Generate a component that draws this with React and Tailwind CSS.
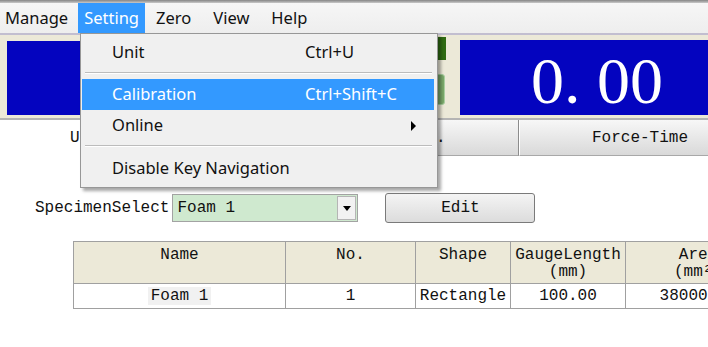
import React from "react";

const mono = "font-['Liberation_Mono',monospace]";

function MenuBar() {
    const items = ["Zero", "View", "Help"];
    return (
        <div className="h-[30px] flex items-stretch bg-gradient-to-b from-[#f6f6f6] to-[#eeeeee] text-[16.5px] text-[#111]">
            <div className="pl-[5px] pr-[10px] flex items-center">Manage</div>
            <div className="px-[6px] flex items-center bg-[#3399ff] text-white">Setting</div>
            {items.map((item) => (
                <div key={item} className="px-[11px] flex items-center">{item}</div>
            ))}
        </div>
    );
}

function SettingMenu() {
    // dropdown that lies over the page
    return (
        <div className="absolute left-[80px] top-[33px] w-[358px] h-[155px] bg-[#f0f0f0] border border-[#979797] shadow-[3px_3px_3px_rgba(0,0,0,0.35)] pt-[2px] pb-[3px] text-[16.5px] text-[#111]">
            <div className="h-[32px] flex items-center">
                <span className="w-[224px] pl-[31px]">Unit</span>
                <span>Ctrl+U</span>
            </div>
            <div className="h-[11px] pt-[4px] ml-[4px] mr-[5px]">
                <div className="border-t border-[#bcbcbc] border-b border-b-white"></div>
            </div>
            <div className="h-[31px] flex items-center bg-[#3399ff] text-white ml-[1px] mr-[3px]">
                <span className="w-[223px] pl-[30px]">Calibration</span>
                <span>Ctrl+Shift+C</span>
            </div>
            <div className="h-[31px] flex items-center">
                <span className="w-[224px] pl-[31px]">Online</span>
                <span className="ml-auto mr-[21px] w-0 h-0 border-y-[5px] border-y-transparent border-l-[5px] border-l-black"></span>
            </div>
            <div className="h-[11px] pt-[4px] ml-[4px] mr-[5px]">
                <div className="border-t border-[#bcbcbc] border-b border-b-white"></div>
            </div>
            <div className="h-[32px] flex items-center">
                <span className="pl-[31px]">Disable Key Navigation</span>
            </div>
        </div>
    );
}

function Display() {
    return (
        <div className="h-[83px] bg-[#ece9d8] flex items-start pt-[5px] pl-[7px]">
            <div className="w-[418px] h-[74px] mt-[1px] bg-[#0404bf]"></div>
            <div className="w-[21px] -mt-[3px] flex flex-col">
                <div className="h-[23px] bg-[#2f6b12]"></div>
                <div className="h-[31px] mt-[14px] mr-[1px] rounded-[3px] border border-[#a9cfa0] bg-[#7aa86a]"></div>
            </div>
            <div className="flex-1 h-[75px] ml-[14px] bg-[#0404bf] flex justify-end pt-[8px] pr-[45px]">
                <span className="font-['Liberation_Serif',serif] text-[66px] leading-none text-white">0. 00</span>
            </div>
        </div>
    );
}

function Tabs() {
    return (
        <div className={`h-[38px] flex border-t-2 border-[#b4b4b4] text-[16px] text-[#111] ${mono}`}>
            <div className="w-[282px] bg-white flex items-center pl-[70px]">U</div>
            <div className="w-[237px] flex items-center pl-[154px] bg-gradient-to-b from-[#f7f7f7] to-[#d9d9d9] border-b border-[#a8a8a8] border-r border-r-[#8c8c8c]">.</div>
            <div className="flex-1 flex items-center pl-[72px] bg-gradient-to-b from-[#f7f7f7] to-[#d9d9d9] border-b border-[#a8a8a8] border-l border-l-white">Force-Time</div>
        </div>
    );
}

export default function App() {
    const columns = [
        { key: "name", title: "Name", unit: null, w: "w-[212px]" },
        { key: "no", title: "No.", unit: null, w: "w-[130px]" },
        { key: "shape", title: "Shape", unit: null, w: "w-[95px]" },
        { key: "gauge", title: "GaugeLength", unit: "(mm)", w: "w-[115px]" },
        { key: "area", title: "Area", unit: "(mm²)", w: "w-[145px]" },
    ];
    const row = { name: "Foam 1", no: "1", shape: "Rectangle", gauge: "100.00", area: "38000.00" };

    return (
        <div className="relative w-[708px] h-[347px] overflow-hidden bg-white font-['Noto_Sans',sans-serif]">
            <div className="h-[3px] bg-gradient-to-b from-[#858585] to-[#c9c9c9]"></div>
            <MenuBar />
            <div className="h-[2px] bg-[#c2bed0]"></div>
            <Display />
            <Tabs />

            <div className={`flex items-center h-[30px] mt-[37px] pl-[35px] text-[16px] text-[#111] ${mono}`}>
                <span>SpecimenSelect</span>
                <div className="ml-[3px] w-[186px] h-[28px] flex items-center border border-[#a3a3a3] bg-[#cfe9cf]">
                    <span className="pl-[4px] flex-1">Foam 1</span>
                    <div className="w-[19px] h-[24px] mr-[1px] flex items-center justify-center bg-[#f2f2f2] border border-[#b5b5b5]">
                        <span className="w-0 h-0 border-x-[4px] border-x-transparent border-t-[5px] border-t-black"></span>
                    </div>
                </div>
                <button type="button" className="ml-[27px] w-[150px] h-[30px] rounded-[3px] border border-[#7a7a7a] bg-gradient-to-b from-[#f4f4f4] to-[#dcdcdc] text-[16px]">
                    Edit
                </button>
            </div>

            <div className="mt-[18px] ml-[73px] w-[697px]">
                <table className={`w-[697px] table-fixed border-collapse text-[16px] text-[#111] ${mono}`}>
                    <thead>
                        <tr className="h-[42px] bg-[#ece9d8]">
                            {columns.map((col) => (
                                <th key={col.key} className={`${col.w} border border-[#a0a0a0] align-top pt-[5px] font-normal leading-[17px] whitespace-nowrap`}>
                                    <p>{col.title}</p>
                                    {col.unit && <p>{col.unit}</p>}
                                </th>
                            ))}
                        </tr>
                    </thead>
                    <tbody>
                        <tr className="h-[25px]">
                            {columns.map((col) => (
                                <td key={col.key} className="border border-[#a0a0a0] text-center whitespace-nowrap">
                                    {col.key === "name" ? <span className="bg-[#f1f1f1] px-[3px]">{row[col.key]}</span> : row[col.key]}
                                </td>
                            ))}
                        </tr>
                    </tbody>
                </table>
            </div>

            <SettingMenu />
        </div>
    );
}
